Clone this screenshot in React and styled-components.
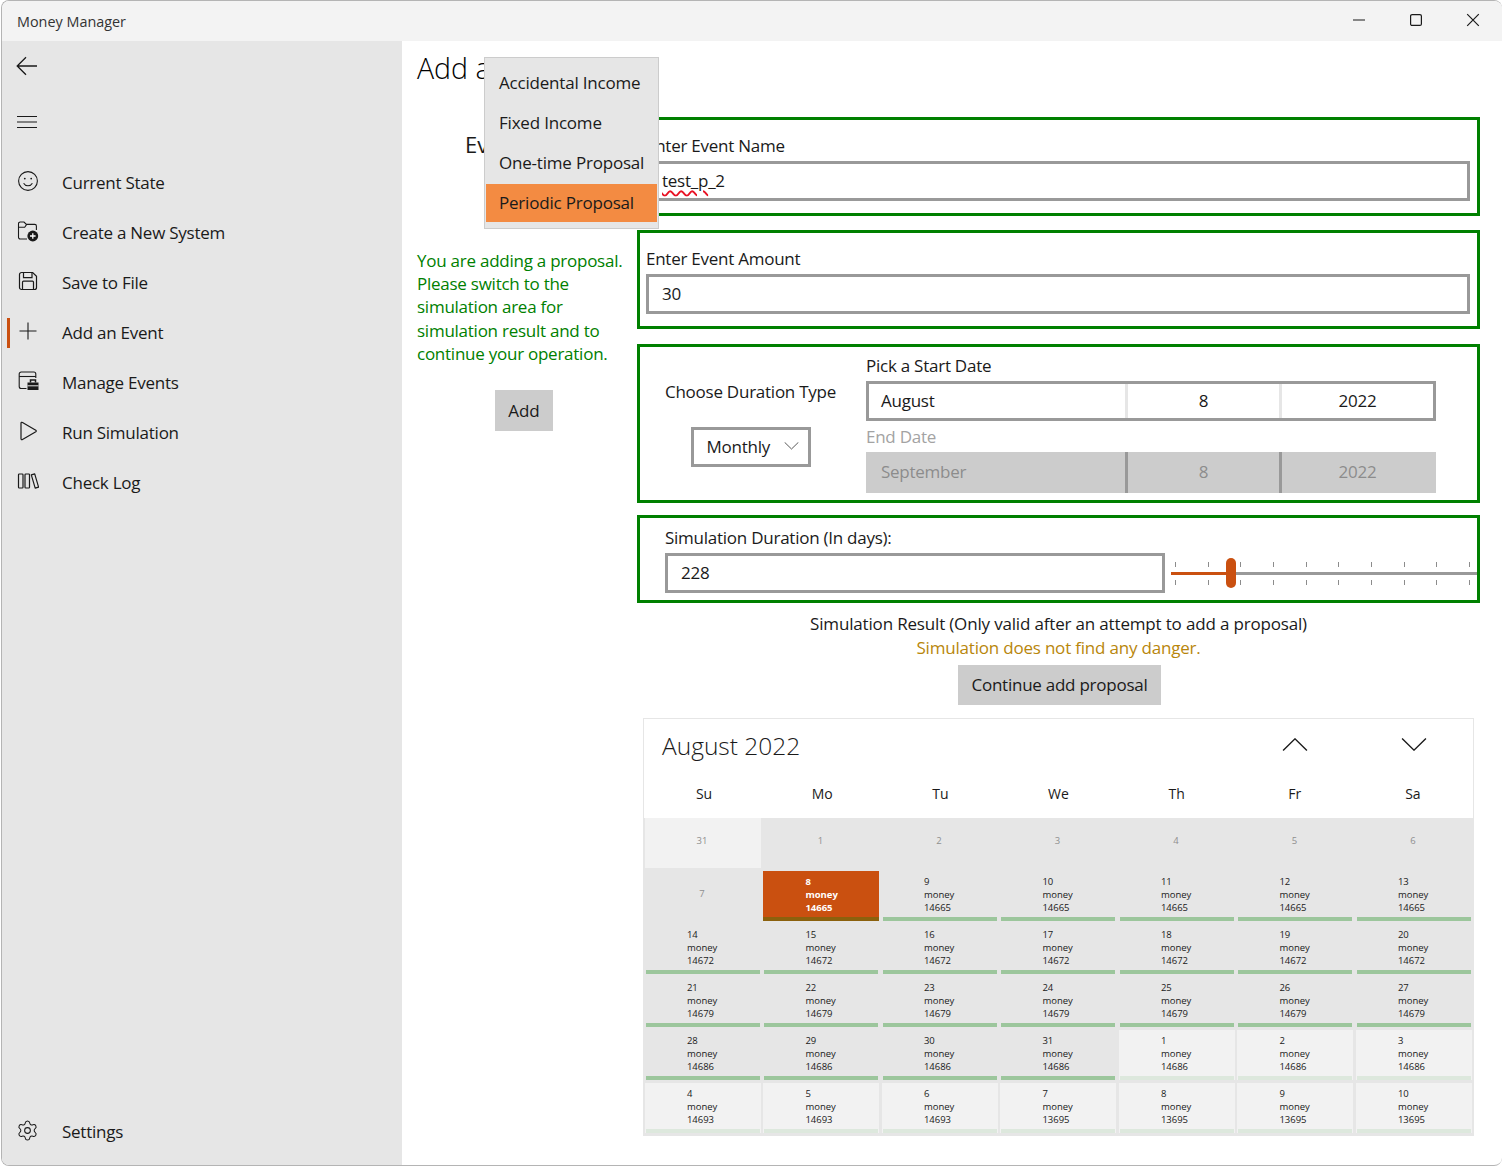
import styled, { createGlobalStyle } from "styled-components";
import { Settings as GearIcon } from "lucide-react";

const GlobalStyle = createGlobalStyle`
    html, body {
        margin: 0;
        padding: 0;
        background: #ffffff;
    }
    * {
        box-sizing: border-box;
    }
    body {
        font-family: "Open Sans", "Noto Sans", sans-serif;
        color: #1a1a1a;
    }
`;

const NAV_ITEMS = [
    { label: "Current State", icon: <SmileGlyph /> },
    { label: "Create a New System", icon: <FolderGlyph /> },
    { label: "Save to File", icon: <SaveGlyph /> },
    { label: "Add an Event", icon: <PlusGlyph />, active: true },
    { label: "Manage Events", icon: <ManageGlyph /> },
    { label: "Run Simulation", icon: <PlayGlyph /> },
    { label: "Check Log", icon: <LogGlyph /> },
];

const MENU_ITEMS = ["Accidental Income", "Fixed Income", "One-time Proposal", "Periodic Proposal"];
const WEEK_DAYS = ["Su", "Mo", "Tu", "We", "Th", "Fr", "Sa"];
const TICKS = Array.from({ length: 10 }, (_, i) => i);

const CALENDAR_DAYS = [
    { day: 31, out: true, empty: true },
    ...[1, 2, 3, 4, 5, 6].map((day) => ({ day, empty: true })),
    { day: 7, empty: true },
    { day: 8, money: 14665, selected: true },
    ...[9, 10, 11, 12, 13].map((day) => ({ day, money: 14665 })),
    ...[14, 15, 16, 17, 18, 19, 20].map((day) => ({ day, money: 14672 })),
    ...[21, 22, 23, 24, 25, 26, 27].map((day) => ({ day, money: 14679 })),
    ...[28, 29, 30, 31].map((day) => ({ day, money: 14686 })),
    ...[1, 2, 3].map((day) => ({ day, money: 14686, out: true })),
    ...[4, 5, 6].map((day) => ({ day, money: 14693, out: true })),
    ...[7, 8, 9, 10].map((day) => ({ day, money: 13695, out: true })),
];

function SmileGlyph() {
    return (
        <svg width="22" height="22" viewBox="0 0 22 22" fill="none" stroke="#1a1a1a" strokeWidth="1.1">
            <circle cx="11" cy="11" r="9.4" />
            <circle cx="7.8" cy="8.6" r="0.9" fill="#1a1a1a" stroke="none" />
            <circle cx="14.2" cy="8.6" r="0.9" fill="#1a1a1a" stroke="none" />
            <path d="M6.6 13.2c1 1.7 2.6 2.6 4.4 2.6s3.4-.9 4.4-2.6" />
        </svg>
    );
}

function FolderGlyph() {
    return (
        <svg width="22" height="22" viewBox="0 0 22 22" fill="none" stroke="#1a1a1a" strokeWidth="1.1">
            <path d="M10 19H3.2A1.7 1.7 0 0 1 1.5 17.3V3.7A1.7 1.7 0 0 1 3.2 2H7l2.4 2.4h8.3a1.7 1.7 0 0 1 1.7 1.7V10" />
            <path d="M1.5 7.2h6.2l2-2.8" />
            <circle cx="15.8" cy="16" r="5.4" fill="#1a1a1a" stroke="none" />
            <path d="M15.8 13.2v5.6M13 16h5.6" stroke="#ffffff" strokeWidth="1.3" />
        </svg>
    );
}

function SaveGlyph() {
    return (
        <svg width="22" height="22" viewBox="0 0 22 22" fill="none" stroke="#1a1a1a" strokeWidth="1.2">
            <path d="M4.500 2.500h11.200l3.800 3.800v11.200a2 2 0 0 1-2 2H4.500a2 2 0 0 1-2-2V4.500a2 2 0 0 1 2-2z" />
            <path d="M6.500 2.500v5.200h8.500V2.500" />
            <path d="M5.500 19.500v-7.300a1 1 0 0 1 1-1h9a1 1 0 0 1 1 1v7.300" />
        </svg>
    );
}

function PlusGlyph() {
    return (
        <svg width="22" height="22" viewBox="0 0 22 22" fill="none" stroke="#1a1a1a" strokeWidth="1.1">
            <path d="M11 2.500v17M2.500 11h17" />
        </svg>
    );
}

function ManageGlyph() {
    return (
        <svg width="22" height="22" viewBox="0 0 22 22" fill="none" stroke="#1a1a1a" strokeWidth="1.1">
            <path d="M9.500 18.500H4.200a2 2 0 0 1-2-2V4a2 2 0 0 1 2-2h12.600a2 2 0 0 1 2 2v4" />
            <path d="M2.200 6.500h16.600" />
            <path d="M10.500 12.500h11v7.500h-11z" fill="#1a1a1a" stroke="none" />
            <path d="M13.500 12.500v-2.500h5v2.500" strokeWidth="1.5" />
            <path d="M10.500 15.800h11" stroke="#e6e6e6" strokeWidth="1" />
        </svg>
    );
}

function PlayGlyph() {
    return (
        <svg width="22" height="22" viewBox="0 0 22 22" fill="none" stroke="#1a1a1a" strokeWidth="1.2">
            <path d="M4 3.200c0-.8.800-1.200 1.500-.8l13.300 7.800c.6.400.6 1.200 0 1.600L5.500 19.600c-.7.400-1.500 0-1.500-.8z" strokeLinejoin="round" />
        </svg>
    );
}

function LogGlyph() {
    return (
        <svg width="22" height="22" viewBox="0 0 22 22" fill="none" stroke="#1a1a1a" strokeWidth="1.2">
            <rect x="1.500" y="4" width="4.500" height="14" rx="0.800" />
            <rect x="8" y="4" width="4.500" height="14" rx="0.800" />
            <path d="M14.300 4.800l3.400-1 3.900 13.400-3.400 1z" strokeLinejoin="round" />
        </svg>
    );
}

function Chevron({ up, size, stroke }) {
    return (
        <svg width={size} height={size / 2} viewBox="0 0 24 12" fill="none" stroke={stroke} strokeWidth="1.300">
            <path d={up ? "M1 11.500L12 .8l11 10.700" : "M1 .5l11 10.700L23 .5"} />
        </svg>
    );
}

export default function App() {
    return (
        <>
            <GlobalStyle />
            <Window>
                <TitleBar>
                    <AppName>Money Manager</AppName>
                    <WindowButtons>
                        <WindowButton>
                            <svg width="14" height="14" viewBox="0 0 14 14" fill="none" stroke="#1a1a1a" strokeWidth="1.200">
                                <path d="M1 7h12" />
                            </svg>
                        </WindowButton>
                        <WindowButton>
                            <svg width="14" height="14" viewBox="0 0 14 14" fill="none" stroke="#1a1a1a" strokeWidth="1.200">
                                <rect x="1.600" y="1.600" width="10.800" height="10.800" rx="1.500" />
                            </svg>
                        </WindowButton>
                        <WindowButton>
                            <svg width="14" height="14" viewBox="0 0 14 14" fill="none" stroke="#1a1a1a" strokeWidth="1.200">
                                <path d="M1.200 1.200l11.600 11.600M12.800 1.200L1.200 12.800" />
                            </svg>
                        </WindowButton>
                    </WindowButtons>
                </TitleBar>

                <Body>
                    <Sidebar>
                        <TopIcon>
                            <svg width="22" height="20" viewBox="0 0 22 20" fill="none" stroke="#1a1a1a" strokeWidth="1.300">
                                <path d="M21 10H1.500M10 1.200L1.200 10 10 18.800" />
                            </svg>
                        </TopIcon>
                        <TopIcon>
                            <svg width="22" height="14" viewBox="0 0 22 14" fill="none" stroke="#1a1a1a" strokeWidth="1.100">
                                <path d="M1 1.500h20M1 7h20M1 12.500h20" />
                            </svg>
                        </TopIcon>
                        <NavList>
                            {NAV_ITEMS.map((item) => (
                                <NavItem key={item.label} $active={item.active}>
                                    <NavIcon>{item.icon}</NavIcon>
                                    <NavLabel>{item.label}</NavLabel>
                                </NavItem>
                            ))}
                        </NavList>
                        <NavItem>
                            <NavIcon>
                                <GearIcon size={23} strokeWidth={1.1} color="#1a1a1a" />
                            </NavIcon>
                            <NavLabel>Settings</NavLabel>
                        </NavItem>
                    </Sidebar>

                    <Main>
                        <LeftColumn>
                            <Heading>Add an Event</Heading>
                            <EventType>Event Type</EventType>
                            <Notice>
                                You are adding a proposal. Please switch to the simulation area for simulation result and to continue your operation.
                            </Notice>
                            <AddButton>Add</AddButton>
                        </LeftColumn>

                        <Menu>
                            {MENU_ITEMS.map((item) => (
                                <MenuItem key={item} $selected={item === "Periodic Proposal"}>{item}</MenuItem>
                            ))}
                        </Menu>

                        <RightColumn>
                            <FieldBox $height={99}>
                                <FieldLabel>Enter Event Name</FieldLabel>
                                <TextField><Misspelled>test_p</Misspelled>_2</TextField>
                            </FieldBox>
                            <FieldBox $height={99} $gap={14}>
                                <FieldLabel>Enter Event Amount</FieldLabel>
                                <TextField>30</TextField>
                            </FieldBox>

                            <DurationBox>
                                <DurationType>
                                    <span>Choose Duration Type</span>
                                    <Dropdown>
                                        Monthly
                                        <Chevron size={15} stroke="#333333" />
                                    </Dropdown>
                                </DurationType>
                                <DatesColumn>
                                    <DateLabel>Pick a Start Date</DateLabel>
                                    <DatePicker>
                                        <MonthPart>August</MonthPart>
                                        <DatePart>8</DatePart>
                                        <DatePart>2022</DatePart>
                                    </DatePicker>
                                    <DateLabel $disabled>End Date</DateLabel>
                                    <DatePicker $disabled>
                                        <MonthPart $disabled>September</MonthPart>
                                        <DatePart $disabled>8</DatePart>
                                        <DatePart $disabled>2022</DatePart>
                                    </DatePicker>
                                </DatesColumn>
                            </DurationBox>

                            <SimulationBox>
                                <SimulationField>
                                    <FieldLabel>Simulation Duration (In days):</FieldLabel>
                                    <TextField $inset={13}>228</TextField>
                                </SimulationField>
                                <Slider>
                                    <TickRow>{TICKS.map((t) => <Tick key={t} />)}</TickRow>
                                    <SliderTrack>
                                        <SliderFill />
                                        <SliderThumb />
                                    </SliderTrack>
                                    <TickRow>{TICKS.map((t) => <Tick key={t} />)}</TickRow>
                                </Slider>
                            </SimulationBox>

                            <ResultTitle>Simulation Result (Only valid after an attempt to add a proposal)</ResultTitle>
                            <ResultText>Simulation does not find any danger.</ResultText>
                            <ContinueButton>Continue add proposal</ContinueButton>

                            <Calendar>
                                <CalendarHeader>
                                    <CalendarTitle>August 2022</CalendarTitle>
                                    <CalendarArrows>
                                        <Chevron up size={26} stroke="#1a1a1a" />
                                        <Chevron size={26} stroke="#1a1a1a" />
                                    </CalendarArrows>
                                </CalendarHeader>
                                <WeekRow>
                                    {WEEK_DAYS.map((d) => <WeekDay key={d}>{d}</WeekDay>)}
                                </WeekRow>
                                <DayGrid>
                                    {CALENDAR_DAYS.map((cell, i) => (
                                        <DayCell key={i} $out={cell.out} $empty={cell.empty} $selected={cell.selected}>
                                            {cell.empty ? (
                                                <EmptyDay>{cell.day}</EmptyDay>
                                            ) : (
                                                <>
                                                    <DayText $selected={cell.selected}>
                                                        <span>{cell.day}</span>
                                                        <span>money</span>
                                                        <span>{cell.money}</span>
                                                    </DayText>
                                                    <DayBar $out={cell.out} $selected={cell.selected} />
                                                </>
                                            )}
                                        </DayCell>
                                    ))}
                                </DayGrid>
                            </Calendar>
                        </RightColumn>
                    </Main>
                </Body>
            </Window>
        </>
    );
}

const Window = styled.div`
    width: 1501px;
    height: 1166px;
    margin-left: 1px;
    border: 1px solid #b4b4b4;
    border-right: none;
    border-radius: 8px;
    overflow: hidden;
    background: #ffffff;

    display: flex;
    flex-direction: column;
`;
const TitleBar = styled.div`
    height: 40px;
    flex-shrink: 0;
    background: #f3f3f3;

    display: flex;
    align-items: center;
    justify-content: space-between;
`;
const AppName = styled.div`
    margin-left: 15px;
    font-size: 14.400px;
    color: #333333;
`;
const WindowButtons = styled.div`
    display: flex;
    margin-right: 1px;
    margin-top: -2px;
`;
const WindowButton = styled.div`
    width: 57px;
    height: 36px;

    display: flex;
    align-items: center;
    justify-content: center;
`;
const Body = styled.div`
    flex: 1;
    display: flex;
    min-height: 0;
`;
const Sidebar = styled.div`
    width: 400px;
    flex-shrink: 0;
    background: #e6e6e6;
    padding: 5px 0 8px;

    display: flex;
    flex-direction: column;
`;
const TopIcon = styled.div`
    height: 40px;
    margin-bottom: 16px;
    padding-left: 14px;

    display: flex;
    align-items: center;
`;
const NavList = styled.div`
    flex: 1;
    display: flex;
    flex-direction: column;
`;
const NavItem = styled.div`
    position: relative;
    height: 50px;
    padding-left: 14px;
    font-size: 17px;
    letter-spacing: -0.25px;

    display: flex;
    align-items: center;
    gap: 23px;

    &::before {
        content: "";
        display: ${(props) => (props.$active ? "block" : "none")};
        position: absolute;
        left: 5px;
        top: 10px;
        width: 3px;
        height: 30px;
        background: #ca5010;
    }
`;
const NavIcon = styled.div`
    width: 23px;
    height: 23px;
    margin-top: -4px;

    display: flex;
    align-items: center;
    justify-content: center;
`;
const NavLabel = styled.span`
    padding-bottom: 2px;
`;
const Main = styled.div`
    position: relative;
    flex: 1;
    display: flex;
`;
const LeftColumn = styled.div`
    width: 235px;
    flex-shrink: 0;
    padding: 7px 0 0 15px;
`;
const Heading = styled.div`
    font-size: 28.500px;
    font-weight: 300;
    line-height: 40px;
    color: #000000;
    white-space: nowrap;
`;
const EventType = styled.div`
    margin: 40px 0 0 48px;
    font-size: 22px;
    line-height: 32px;
    white-space: nowrap;
`;
const Notice = styled.div`
    margin-top: 89px;
    width: 215px;
    font-size: 17px;
    line-height: 23.200px;
    letter-spacing: -0.25px;
    color: #008000;
`;
const AddButton = styled.div`
    width: 58px;
    height: 41px;
    margin: 25px 0 0 78px;
    background: #cccccc;
    font-size: 17px;

    display: flex;
    align-items: center;
    justify-content: center;
`;
const Menu = styled.div`
    position: absolute;
    left: 82px;
    top: 16px;
    z-index: 2;
    width: 175px;
    height: 172px;
    padding: 5px 1px 6px;
    background: #e6e6e6;
    border: 1px solid #cccccc;
    font-size: 17px;
    letter-spacing: -0.2px;
`;
const MenuItem = styled.div`
    height: ${(props) => (props.$selected ? "38px" : "40px")};
    margin-top: ${(props) => (props.$selected ? "1px" : "0")};
    padding: 0 0 2px 13px;
    background: ${(props) => (props.$selected ? "#f38b42" : "transparent")};
    white-space: nowrap;

    display: flex;
    align-items: center;
`;
const RightColumn = styled.div`
    width: 843px;
    flex-shrink: 0;
    padding-top: 76px;

    display: flex;
    flex-direction: column;
`;
const GreenBox = styled.div`
    border: 3px solid #008000;
`;
const FieldBox = styled(GreenBox)`
    height: ${(props) => props.$height}px;
    margin-top: ${(props) => props.$gap || 0}px;
    padding: 0 7px 12px 6px;

    display: flex;
    flex-direction: column;
    justify-content: flex-end;
`;
const FieldLabel = styled.div`
    font-size: 17px;
    line-height: 24px;
    letter-spacing: -0.25px;
    margin-bottom: 3px;
`;
const TextField = styled.div`
    height: 40px;
    padding: 0 0 2px ${(props) => props.$inset || 13}px;
    background: #ffffff;
    border: 3px solid #999999;
    font-size: 17px;
    letter-spacing: -0.25px;

    display: flex;
    align-items: center;
    white-space: pre;
`;
const Misspelled = styled.span`
    text-decoration: underline wavy #e81123;
    text-decoration-thickness: 1.600px;
    text-underline-offset: 3px;
`;
const DurationBox = styled(GreenBox)`
    height: 159px;
    margin-top: 15px;

    display: flex;
`;
const DurationType = styled.div`
    width: 226px;
    padding: 33px 5px 0 0;
    font-size: 17px;
    letter-spacing: -0.25px;

    display: flex;
    flex-direction: column;
    align-items: center;
    gap: 24px;
`;
const Dropdown = styled.div`
    width: 120px;
    height: 40px;
    padding: 0 9px 2px 13px;
    border: 3px solid #999999;

    display: flex;
    align-items: center;
    justify-content: space-between;
`;
const DatesColumn = styled.div`
    width: 570px;
    font-size: 17px;
    letter-spacing: -0.25px;
`;
const DateLabel = styled.div`
    height: ${(props) => (props.$disabled ? "31px" : "34px")};
    padding-top: ${(props) => (props.$disabled ? "4px" : "7px")};
    line-height: 24px;
    color: ${(props) => (props.$disabled ? "#a3a3a3" : "#1a1a1a")};
`;
const DatePicker = styled.div`
    height: ${(props) => (props.$disabled ? "41px" : "40px")};
    padding: ${(props) => (props.$disabled ? "0 3px 2px 0" : "0 0 2px")};
    background: ${(props) => (props.$disabled ? "#cccccc" : "#ffffff")};
    border: ${(props) => (props.$disabled ? "none" : "3px solid #999999")};
    color: ${(props) => (props.$disabled ? "#8c8c8c" : "#1a1a1a")};

    display: grid;
    grid-template-columns: ${(props) => (props.$disabled ? "259px" : "256px")} 154px 1fr;
`;
const MonthPart = styled.div`
    padding-left: ${(props) => (props.$disabled ? "15px" : "12px")};

    display: flex;
    align-items: center;
`;
const DatePart = styled.div`
    margin-bottom: -2px;
    padding-bottom: 2px;
    border-left: 3px solid ${(props) => (props.$disabled ? "#999999" : "#e6e6e6")};

    display: flex;
    align-items: center;
    justify-content: center;
`;
const SimulationBox = styled(GreenBox)`
    height: 88px;
    margin-top: 12px;
    padding: 0 0 7px 25px;

    display: flex;
    align-items: flex-end;
    gap: 6px;
`;
const SimulationField = styled.div`
    width: 500px;
    flex-shrink: 0;
`;
const Slider = styled.div`
    flex: 1;
    height: 40px;
    padding-top: 9px;

    display: flex;
    flex-direction: column;
`;
const TickRow = styled.div`
    height: 5px;
    padding: 0 7px 0 4px;

    display: flex;
    justify-content: space-between;
`;
const Tick = styled.div`
    width: 1px;
    height: 5px;
    background: #8c8c8c;
`;
const SliderTrack = styled.div`
    position: relative;
    height: 3px;
    margin: 5px 0;
    background: #999999;
`;
const SliderFill = styled.div`
    width: 60px;
    height: 3px;
    background: #ca5010;
`;
const SliderThumb = styled.div`
    position: absolute;
    left: 55px;
    top: -14px;
    width: 10px;
    height: 30px;
    border-radius: 5px;
    background: #ca5010;
`;
const ResultTitle = styled.div`
    margin-top: 9px;
    font-size: 17px;
    line-height: 24px;
    letter-spacing: -0.17px;
    text-align: center;
`;
const ResultText = styled.div`
    font-size: 17px;
    line-height: 24px;
    letter-spacing: -0.2px;
    text-align: center;
    color: #b8860b;
`;
const ContinueButton = styled.div`
    align-self: center;
    width: 203px;
    height: 40px;
    margin: 5px 0 0 2px;
    padding-bottom: 1px;
    background: #cccccc;
    font-size: 17px;
    letter-spacing: -0.25px;

    display: flex;
    align-items: center;
    justify-content: center;
`;
const Calendar = styled.div`
    width: 831px;
    margin: 13px 0 0 6px;
    border: 1px solid #e6e6e6;
    border-bottom: none;
`;
const CalendarHeader = styled.div`
    height: 57px;
    padding: 0 46px 0 18px;

    display: flex;
    align-items: center;
    justify-content: space-between;
`;
const CalendarTitle = styled.div`
    margin-top: -5px;
    font-size: 24.500px;
    font-weight: 300;
    color: #1a1a1a;
`;
const CalendarArrows = styled.div`
    margin-top: -6px;
    display: flex;
    gap: 93px;
`;
const WeekRow = styled.div`
    height: 42px;
    padding: 0 1px;

    display: grid;
    grid-template-columns: repeat(7, 1fr);
`;
const WeekDay = styled.div`
    padding-bottom: 8px;
    font-size: 14px;
    text-align: center;

    display: flex;
    align-items: center;
    justify-content: center;
`;
const DayGrid = styled.div`
    background: #e6e6e6;
    padding: 0 1.100px 3px 0.900px;

    display: grid;
    grid-template-columns: repeat(7, 116px);
    justify-content: space-between;
    grid-auto-rows: 50px;
    row-gap: 3px;
`;
const DayCell = styled.div`
    background: ${(props) => {
        if (props.$selected) return "#ca5010";
        return props.$out ? "#f2f2f2" : "transparent";
    }};

    display: flex;
    flex-direction: column;
    justify-content: ${(props) => (props.$empty ? "center" : "space-between")};
`;
const EmptyDay = styled.div`
    margin: -6px 2px 0 0;
    text-align: center;
    font-size: 9.500px;
    color: #8f8f8f;
`;
const DayText = styled.div`
    padding: 4px 0 0 42px;
    font-size: 9.500px;
    line-height: 13px;
    font-weight: ${(props) => (props.$selected ? 700 : 400)};
    color: ${(props) => (props.$selected ? "#ffffff" : "#1a1a1a")};

    display: flex;
    flex-direction: column;
`;
const DayBar = styled.div`
    height: 4px;
    margin: ${(props) => (props.$selected ? "0" : "0 1px")};
    background: ${(props) => {
        if (props.$selected) return "#8b610d";
        return props.$out ? "#dde8dd" : "#9cc69c";
    }};
`;
